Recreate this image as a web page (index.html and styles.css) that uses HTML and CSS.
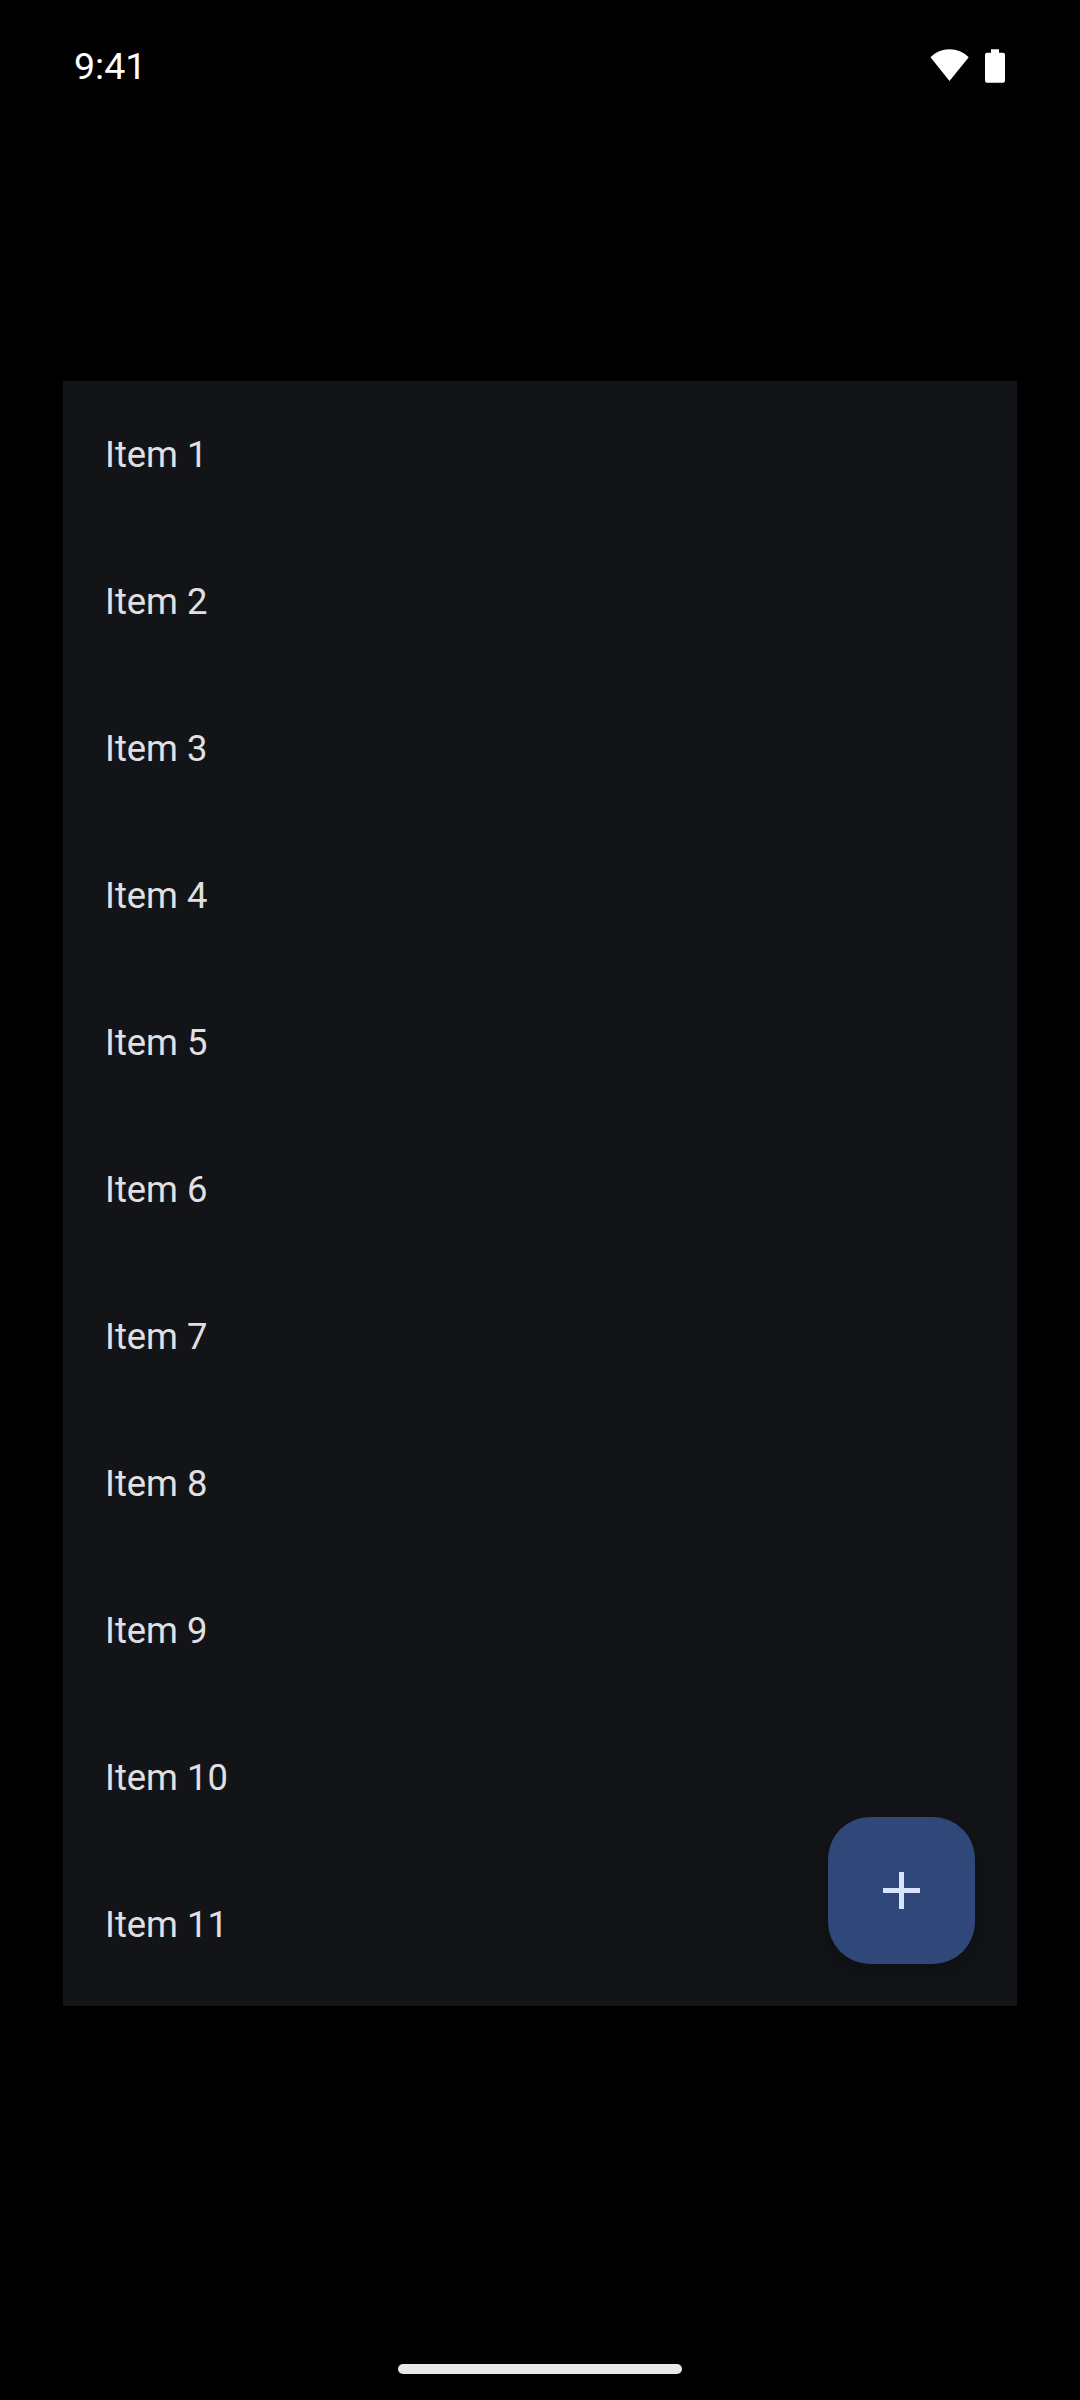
FILE: index.html
```html
<!DOCTYPE html>
<html lang="en">
<head>
<meta charset="utf-8">
<title>Items</title>
<link rel="stylesheet" href="styles.css">
</head>
<body>
<div class="screen">
  <header class="status">
    <span class="time">9:41</span>
    <div class="status-icons">
      <svg class="wifi" width="40" height="34" viewBox="0 0 40 34"><path d="M0.5 9.3C5.5 4.2 12.2 1.3 19.5 1.3S33.5 4.2 38.7 9.3L19.5 33Z" fill="#fff"/></svg>
      <svg class="battery" width="20" height="34" viewBox="0 0 20 34"><path d="M6 1.3H14V4.7H18A2 2 0 0 1 20 6.7V32.7A2 2 0 0 1 18 34.7H2A2 2 0 0 1 0 32.7V6.7A2 2 0 0 1 2 4.7H6Z" fill="#fff"/></svg>
    </div>
  </header>
  <main class="panel">
    <ul class="list">
      <li class="item">Item 1</li>
      <li class="item">Item 2</li>
      <li class="item">Item 3</li>
      <li class="item">Item 4</li>
      <li class="item">Item 5</li>
      <li class="item">Item 6</li>
      <li class="item">Item 7</li>
      <li class="item">Item 8</li>
      <li class="item">Item 9</li>
      <li class="item">Item 10</li>
      <li class="item">Item 11</li>
    </ul>
    <button class="fab" aria-label="Add">
      <svg width="37" height="37" viewBox="0 0 37 37"><path d="M16 0H21V16H37V21H21V37H16V21H0V16H16Z" fill="#d9e2ff"/></svg>
    </button>
  </main>
  <div class="home-bar"></div>
</div>
</body>
</html>
```

FILE: styles.css
```css
* { box-sizing: border-box; }
html, body { margin: 0; padding: 0; background: #000; }
.screen {
  width: 1080px;
  height: 2400px;
  display: flex;
  flex-direction: column;
  background: #000;
  font-family: Roboto, "Liberation Sans", sans-serif;
  overflow: hidden;
}
.status {
  height: 131px;
  flex: none;
  display: flex;
  justify-content: space-between;
  align-items: flex-start;
  padding: 45px 75px 0 74px;
}
.time {
  color: #fff;
  font-size: 37.5px;
  line-height: 42px;
}
.status-icons {
  display: flex;
  gap: 15px;
  padding-top: 3px;
  overflow: visible;
}
.status-icons svg { display: block; overflow: visible; }
.panel {
  position: relative;
  flex: none;
  margin: 250px 63px 0;
  height: 1625px;
  background: #121417;
}
.list { list-style: none; margin: 0; padding: 0; }
.item {
  height: 147px;
  display: flex;
  align-items: center;
  padding-left: 42px;
  color: #e0e0e4;
  font-size: 36.4px;
}
.fab {
  position: absolute;
  right: 42px;
  bottom: 42px;
  width: 147px;
  height: 147px;
  border: 0;
  padding: 0;
  border-radius: 42px;
  background: #30477a;
  box-shadow: 0 8px 22px rgba(0, 0, 0, 0.25);
  display: flex;
  align-items: center;
  justify-content: center;
}
.fab svg { display: block; }
.home-bar {
  flex: none;
  align-self: center;
  width: 284px;
  height: 10px;
  margin-top: 358px;
  border-radius: 5px;
  background: #e8e8e8;
}
```
